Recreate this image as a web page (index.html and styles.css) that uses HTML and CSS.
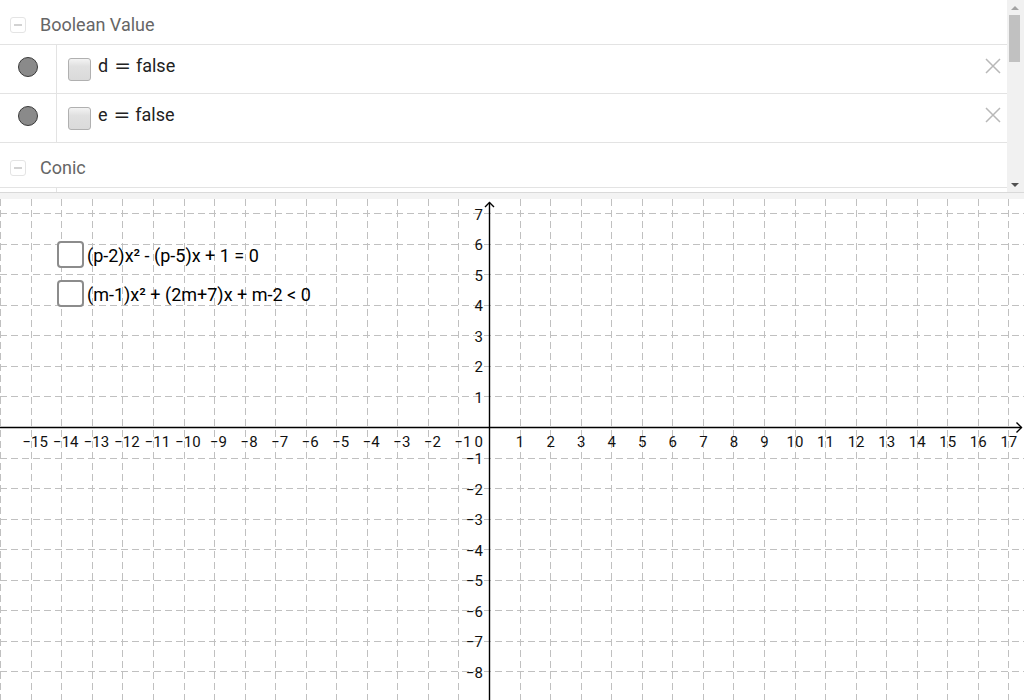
FILE: index.html
```html
<!DOCTYPE html>
<html>
<head>
<meta charset="utf-8">
<link rel="stylesheet" href="styles.css">
</head>
<body>
<div class="app">
  <div class="algebra">
    <div class="av-list">
      <div class="group-header"><span class="collapse"><span class="minus"></span></span><span class="group-title">Boolean Value</span></div>
      <div class="av-row">
        <div class="marble-cell"><span class="marble"></span></div>
        <div class="item">
          <span class="cb"></span>
          <span class="def">d<span class="eq">=</span>false</span>
          <svg class="close" viewBox="0 0 16 16" width="16" height="16"><path d="M1 1L15 15M15 1L1 15" stroke="#b8b8b8" stroke-width="1.5" fill="none"/></svg>
        </div>
      </div>
      <div class="av-row">
        <div class="marble-cell"><span class="marble"></span></div>
        <div class="item">
          <span class="cb"></span>
          <span class="def">e<span class="eq">=</span>false</span>
          <svg class="close" viewBox="0 0 16 16" width="16" height="16"><path d="M1 1L15 15M15 1L1 15" stroke="#b8b8b8" stroke-width="1.5" fill="none"/></svg>
        </div>
      </div>
      <div class="group-header"><span class="collapse"><span class="minus"></span></span><span class="group-title">Conic</span></div>
      <div class="av-row">
        <div class="marble-cell"></div>
        <div class="item"></div>
      </div>
    </div>
    <div class="scrollbar">
      <div class="sb-btn"><span class="arrow-up"></span></div>
      <div class="sb-track"><div class="sb-thumb"></div></div>
      <div class="sb-btn"><span class="arrow-down"></span></div>
    </div>
  </div>
  <div class="splitter"></div>
  <div class="graphics">
    <svg class="canvas" width="1024" height="501" viewBox="0 0 1024 501">
      <g fill="none" stroke="#c0c0c0" stroke-width="1" stroke-dasharray="7 4" shape-rendering="crispEdges">
        <path d="M0.7 0V501M31.25 0V501M61.8 0V501M92.35 0V501M122.9 0V501M153.45 0V501M184 0V501M214.55 0V501M245.1 0V501M275.65 0V501M306.2 0V501M336.75 0V501M367.3 0V501M397.85 0V501M428.4 0V501M458.95 0V501M520.05 0V501M550.6 0V501M581.15 0V501M611.7 0V501M642.25 0V501M672.8 0V501M703.35 0V501M733.9 0V501M764.45 0V501M795 0V501M825.55 0V501M856.1 0V501M886.65 0V501M917.2 0V501M947.75 0V501M978.3 0V501M1008.85 0V501"/>
        <path d="M0 14.65H1024M0 45.2H1024M0 75.75H1024M0 106.3H1024M0 136.85H1024M0 167.4H1024M0 197.95H1024M0 259.05H1024M0 289.6H1024M0 320.15H1024M0 350.7H1024M0 381.25H1024M0 411.8H1024M0 442.35H1024M0 472.9H1024"/>
      </g>
      <g fill="none" stroke="#000" stroke-width="1.4">
        <path d="M0 228.5H1021.5"/>
        <path d="M1016.5 223.5L1021.5 228.5L1016.5 233.5"/>
        <path d="M489.5 3.5V501"/>
        <path d="M485 8L489.5 3.5L494 8"/>
      </g>
      <g class="lbl" text-anchor="middle">
        <text x="35.25" y="248">−15</text>
        <text x="65.8" y="248">−14</text>
        <text x="96.35" y="248">−13</text>
        <text x="126.9" y="248">−12</text>
        <text x="157.45" y="248">−11</text>
        <text x="188" y="248">−10</text>
        <text x="218.55" y="248">−9</text>
        <text x="249.1" y="248">−8</text>
        <text x="279.65" y="248">−7</text>
        <text x="310.2" y="248">−6</text>
        <text x="340.75" y="248">−5</text>
        <text x="371.3" y="248">−4</text>
        <text x="401.85" y="248">−3</text>
        <text x="432.4" y="248">−2</text>
        <text x="462.95" y="248">−1</text>
        <text x="520.05" y="248">1</text>
        <text x="550.6" y="248">2</text>
        <text x="581.15" y="248">3</text>
        <text x="611.7" y="248">4</text>
        <text x="642.25" y="248">5</text>
        <text x="672.8" y="248">6</text>
        <text x="703.35" y="248">7</text>
        <text x="733.9" y="248">8</text>
        <text x="764.45" y="248">9</text>
        <text x="795" y="248">10</text>
        <text x="825.55" y="248">11</text>
        <text x="856.1" y="248">12</text>
        <text x="886.65" y="248">13</text>
        <text x="917.2" y="248">14</text>
        <text x="947.75" y="248">15</text>
        <text x="978.3" y="248">16</text>
        <text x="1008.85" y="248">17</text>
      </g>
      <g class="lbl" text-anchor="end">
        <text x="483" y="248">0</text>
        <text x="483" y="20.65">7</text>
        <text x="483" y="51.2">6</text>
        <text x="483" y="81.75">5</text>
        <text x="483" y="112.3">4</text>
        <text x="483" y="142.85">3</text>
        <text x="483" y="173.4">2</text>
        <text x="483" y="203.95">1</text>
        <text x="483" y="265.05">−1</text>
        <text x="483" y="295.6">−2</text>
        <text x="483" y="326.15">−3</text>
        <text x="483" y="356.7">−4</text>
        <text x="483" y="387.25">−5</text>
        <text x="483" y="417.8">−6</text>
        <text x="483" y="448.35">−7</text>
        <text x="483" y="478.9">−8</text>
      </g>
    </svg>
    <div class="overlays">
      <div class="gcheck"><span class="gbox"></span><span class="gtext">(p-2)x² - (p-5)x + 1 = 0</span></div>
      <div class="gcheck"><span class="gbox"></span><span class="gtext">(m-1)x² + (2m+7)x + m-2 &lt; 0</span></div>
    </div>
  </div>
</div>
</body>
</html>
```
FILE: styles.css
```css
* { box-sizing: border-box; }
html, body { margin: 0; padding: 0; background: #fff; }
body { font-family: Roboto, "Noto Sans", "Liberation Sans", sans-serif; }

.app { width: 1024px; height: 700px; overflow: hidden; background: #fff; }

.algebra { display: flex; height: 192px; overflow: hidden; }
.av-list { flex: 1; min-width: 0; }

.group-header {
  height: 45px;
  border-bottom: 1px solid #e3e3e3;
  display: flex;
  align-items: center;
  padding: 5px 0 0 10px;
}
.collapse {
  width: 16px; height: 16px;
  border: 1px solid #e4e4e4;
  border-radius: 3px;
  display: flex; align-items: center; justify-content: center;
  margin-right: 14px;
  margin-top: 1px;
}
.minus { width: 8px; height: 2px; background: #d2d2d2; }
.group-title { font-size: 18px; color: #666; margin-top: -1px; }

.av-row { height: 49px; border-bottom: 1px solid #e3e3e3; display: flex; }
.marble-cell {
  width: 57px;
  border-right: 1px solid #e3e3e3;
  padding-top: 12px;
  display: flex; justify-content: center; align-items: flex-start;
}
.marble {
  width: 20px; height: 20px; border-radius: 50%;
  background: #8a8a8a;
  border: 1px solid #3a3a3a;
}
.item {
  flex: 1;
  display: flex; align-items: flex-start;
  padding: 13px 6px 0 11px;
}
.cb {
  width: 23px; height: 23px;
  border: 1px solid #b0b0b0;
  border-radius: 3px;
  background: linear-gradient(to bottom, #f3f3f3 0%, #e0e0e0 35%, #dadada 100%);
}
.def {
  margin-left: 7px;
  margin-top: -2px;
  font-size: 18px;
  line-height: 18px;
  color: #222;
}
.eq {
  font-family: "DejaVu Sans", sans-serif;
  font-size: 20px;
  margin: 0 5px 0 6px;
}
.close { margin-left: auto; display: block; }

.scrollbar {
  width: 17px;
  background: #f1f1f1;
  display: flex; flex-direction: column;
}
.sb-btn { height: 15px; display: flex; align-items: center; justify-content: center; }
.arrow-up { width: 0; height: 0; border-left: 4px solid transparent; border-right: 4px solid transparent; border-bottom: 4px solid #a3a3a3; margin-left: -2px; }
.arrow-down { width: 0; height: 0; border-left: 4px solid transparent; border-right: 4px solid transparent; border-top: 4px solid #505050; margin-left: -2px; }
.sb-track { flex: 1; }
.sb-thumb { width: 11px; height: 47px; margin-left: 2px; background: #c1c1c1; }

.splitter { height: 7px; border-top: 1px solid #d9d9d9; background: #f3f3f3; }

.graphics { position: relative; height: 501px; background: #fff; overflow: hidden; }
.canvas { display: block; }
.lbl { font-family: Roboto, "Noto Sans", sans-serif; font-size: 15px; fill: #111; }

.overlays {
  position: absolute; left: 57px; top: 42px;
  display: flex; flex-direction: column; gap: 12px;
}
.gcheck { display: flex; align-items: flex-start; gap: 3px; height: 27px; }
.gbox {
  width: 27px; height: 27px;
  border: 2px solid #8c8c8c;
  border-radius: 4px;
  background: #fff;
}
.gtext { font-size: 18px; line-height: 27px; margin-top: 1px; color: #000; white-space: nowrap; }
```
